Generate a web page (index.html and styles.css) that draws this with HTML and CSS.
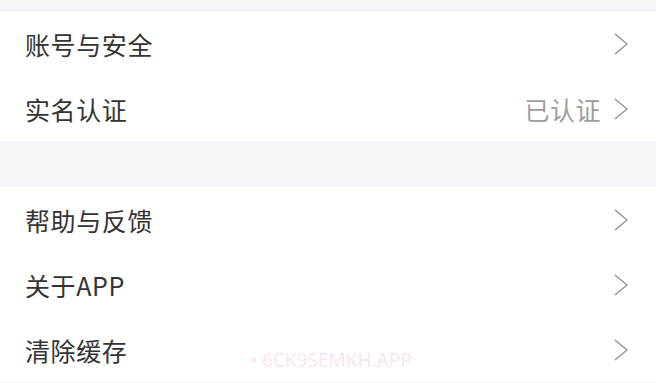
FILE: index.html
```html
<!DOCTYPE html>
<html lang="zh-CN">
<head>
    <meta charset="UTF-8">
    <meta name="viewport" content="width=device-width, initial-scale=1.0">
    <title>设置</title>
    <link rel="stylesheet" href="styles.css">
</head>
<body>

    <div class="page">
        <div class="spacer-top"></div>

        <!-- 账号 -->
        <div class="group">
            <div class="row">
                <span class="label">账号与安全</span>
                <span class="right">
                    <svg class="arrow" viewBox="0 0 14 24"><polyline points="1,2 13,12 1,22"/></svg>
                </span>
            </div>
            <div class="row">
                <span class="label">实名认证</span>
                <span class="right">
                    <span class="value">已认证</span>
                    <svg class="arrow" viewBox="0 0 14 24"><polyline points="1,2 13,12 1,22"/></svg>
                </span>
            </div>
        </div>

        <div class="spacer"></div>

        <!-- 其他 -->
        <div class="group">
            <div class="row">
                <span class="label">帮助与反馈</span>
                <span class="right">
                    <svg class="arrow" viewBox="0 0 14 24"><polyline points="1,2 13,12 1,22"/></svg>
                </span>
            </div>
            <div class="row">
                <span class="label">关于APP</span>
                <span class="right">
                    <svg class="arrow" viewBox="0 0 14 24"><polyline points="1,2 13,12 1,22"/></svg>
                </span>
            </div>
            <div class="row">
                <span class="label">清除缓存</span>
                <span class="right">
                    <svg class="arrow" viewBox="0 0 14 24"><polyline points="1,2 13,12 1,22"/></svg>
                </span>
            </div>
        </div>

        <div class="watermark">• 6CK9SEMKH.APP</div>
    </div>

</body>
</html>
```

FILE: styles.css
```css
/* Estilos generales */
body {
    margin: 0;
    background-color: #f4f5f9;
    font-family: 'Noto Sans CJK SC', 'Noto Sans', sans-serif;
    color: #333;
}

.page {
    position: relative;
    height: 383px;
    overflow: hidden;
}

.spacer-top {
    height: 11px;
    border-bottom: 1px solid #eceef2;
    box-sizing: border-box;
}

.spacer {
    height: 46px;
}

.group {
    background-color: #fff;
}

.row {
    height: 65px;
    display: flex;
    align-items: center;
    justify-content: space-between;
    padding: 0 28px 0 25px;
}

.label {
    font-size: 25px;
    letter-spacing: 0.6px;
    color: #333;
}

.right {
    display: flex;
    align-items: center;
    gap: 13px;
}

.value {
    font-size: 25px;
    color: #9d9d9d;
    letter-spacing: 0.5px;
}

.arrow {
    width: 14px;
    height: 24px;
}

.arrow polyline {
    fill: none;
    stroke: #929292;
    stroke-width: 1.4;
}

/* marca de agua */
.watermark {
    position: absolute;
    left: 250px;
    top: 347px;
    font-family: 'Noto Sans', sans-serif;
    font-size: 19px;
    color: #fbe4f6;
}
```
